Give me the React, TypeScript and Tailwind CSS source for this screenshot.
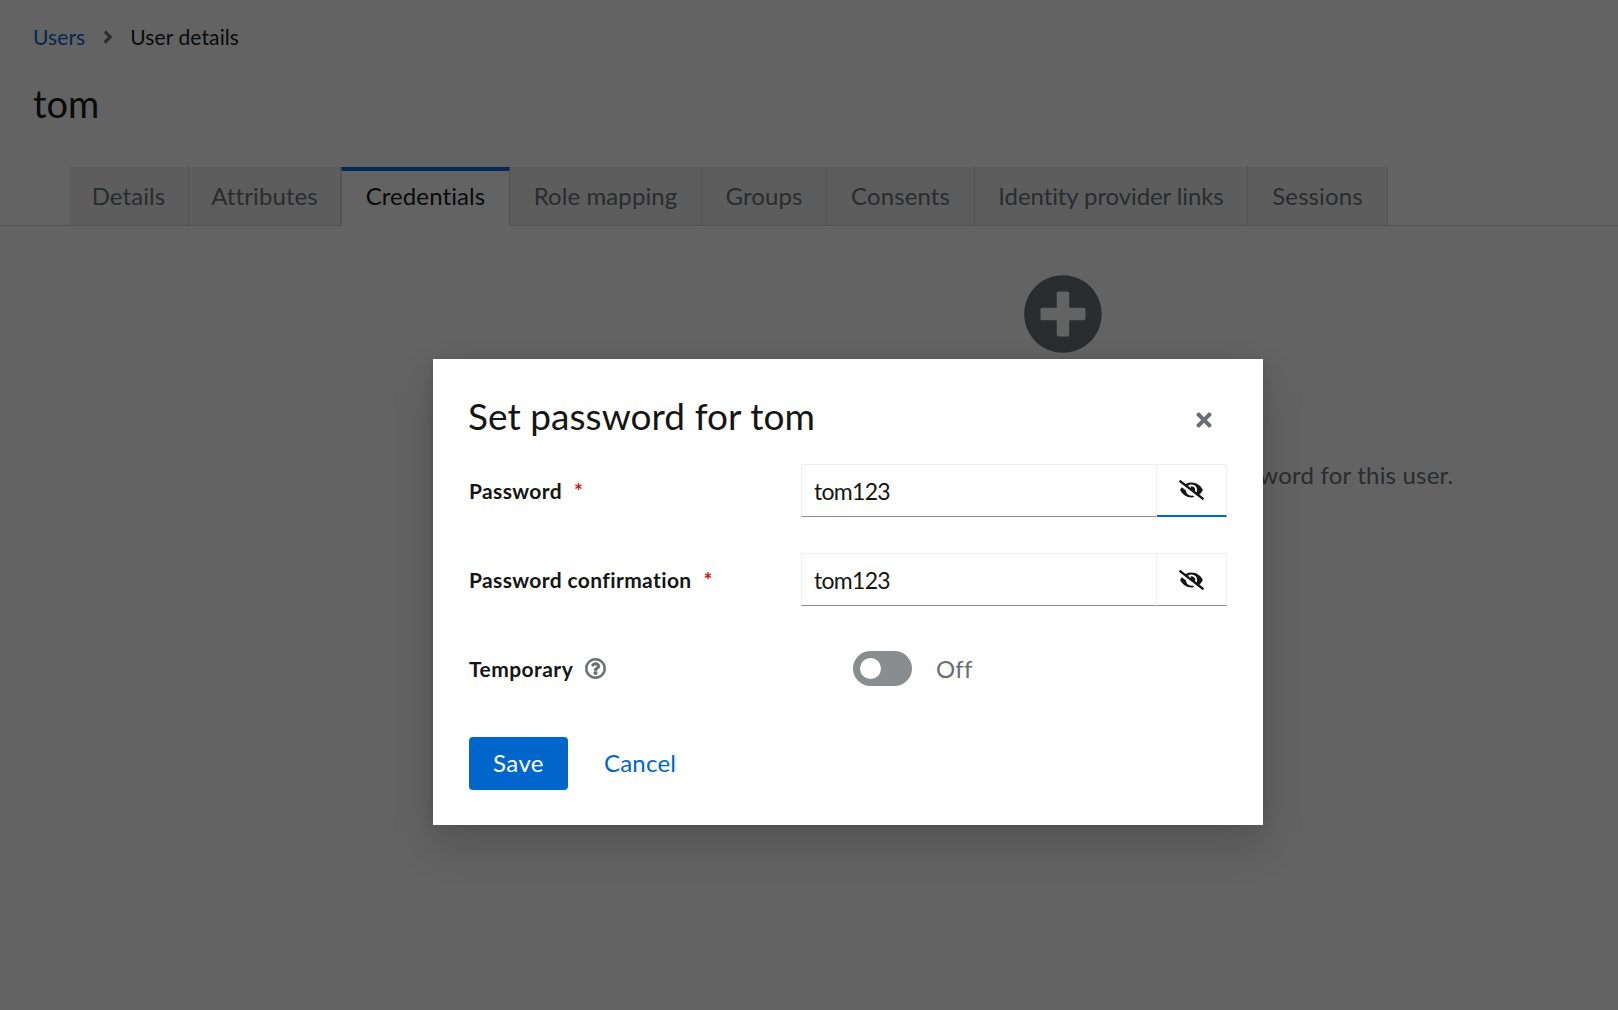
import { FaAngleRight, FaEyeSlash, FaPlusCircle, FaRegQuestionCircle, FaTimes } from "react-icons/fa";

const tabs = [
  { name: "Details", w: "w-[120px]", track: "tracking-[0.1px]" },
  { name: "Attributes", w: "w-[152px]", track: "tracking-[0.1px]" },
  { name: "Credentials", w: "w-[169px]", track: "tracking-[0.1px]", active: true },
  { name: "Role mapping", w: "w-[192px]", track: "tracking-[0.1px]" },
  { name: "Groups", w: "w-[125px]", track: "tracking-[0.1px]" },
  { name: "Consents", w: "w-[148px]", track: "tracking-[0.1px]" },
  { name: "Identity provider links", w: "w-[273px]", track: "tracking-[-0.1px]" },
  { name: "Sessions", w: "w-[140px]", track: "tracking-[0.1px]" },
];

function PasswordRow({ label, focused }: { label: string; focused?: boolean }) {
  return (
    <div className="flex items-center h-[53px]">
      <div className="w-[332px] flex items-center text-[21px] tracking-[0.38px] font-bold text-[#151515]">
        <span>{label}</span>
        <span className="ml-[12px] text-[#c9190b]">*</span>
      </div>
      <div className="flex w-[426px] h-[53px]">
        <div className="w-[356px] border border-[#f0f0f0] border-b-[#8a8d90] px-[12px] pt-[1px] flex items-center text-[23px] tracking-[-0.7px] text-[#151515]">
          tom123
        </div>
        <div
          className={`flex-1 flex items-center justify-center border border-l-0 border-[#f0f0f0] text-[#151515] ${
            focused ? "border-b-2 border-b-[#06c]" : "border-b-[#8a8d90]"
          }`}
        >
          <FaEyeSlash className="w-[25px] h-[20px]" />
        </div>
      </div>
    </div>
  );
}

export default function App() {
  return (
    <div className="relative w-[1618px] h-[1010px] overflow-hidden bg-white font-['Lato',sans-serif] text-[#151515]">
      <div className="pl-[33px] pt-[23px] h-[167px]">
        <div className="flex items-center text-[21px] tracking-[0.1px] leading-[28px]">
          <span className="text-[#06c]">Users</span>
          <FaAngleRight className="ml-[16px] mr-[15px] w-[14px] h-[20px] text-[#6a6e73]" />
          <span>User details</span>
        </div>
        <div className="mt-[30px] text-[38px] leading-[44px]">tom</div>
      </div>
      <div className="flex pl-[69px] border-b border-[#d2d2d2] h-[59px]">
        {tabs.map((t) => (
          <div
            key={t.name}
            className={`${t.w} ${t.track} flex items-center justify-center text-[24px] border-r border-[#d2d2d2] ${
              t.active
                ? "bg-white text-[#151515] border-t-[4px] border-t-[#06c] border-l h-[59px] pb-[6px]"
                : "bg-[#f0f0f0] text-[#6a6e73] h-[58px]"
            }`}
          >
            {t.name}
          </div>
        ))}
      </div>
      <div className="flex flex-col items-center pt-[48px] ml-[508px] w-[1110px]">
        <FaPlusCircle className="w-[80px] h-[80px] text-[#6a6e73]" />
        <div className="mt-[38px] text-[28px]">No credentials</div>
        <div className="mt-[23px] mr-[19px] text-[24px] tracking-[0.2px] text-[#6a6e73] whitespace-nowrap">
          This user does not have any credentials. You can set password for this user.
        </div>
      </div>

      <div className="absolute inset-0 bg-[rgba(3,3,3,0.62)]" />

      <div className="absolute left-[433px] top-[359px] w-[830px] h-[466px] bg-white px-[36px] pt-[35px] shadow-[0_20px_40px_rgba(3,3,3,0.16),0_0_10px_rgba(3,3,3,0.1)]">
        <div className="flex items-start justify-between">
          <div className="-ml-[1px] text-[37px] tracking-[0.05px] leading-[44px] text-[#151515]">Set password for tom</div>
          <FaTimes className="mt-[15px] mr-[12px] w-[22px] h-[22px] text-[#6a6e73]" />
        </div>
        <div className="mt-[26px] flex flex-col gap-[36px]">
          <PasswordRow label="Password" focused />
          <PasswordRow label="Password confirmation" />
          <div className="flex items-center h-[53px]">
            <div className="w-[332px] flex items-center text-[21px] tracking-[0.45px] font-bold">
              <span>Temporary</span>
              <FaRegQuestionCircle
                stroke="currentColor"
                strokeWidth={16}
                className="ml-[12px] w-[21px] h-[21px] text-[#6a6e73]"
              />
            </div>
            <div className="ml-[52px] w-[59px] h-[35px] rounded-full bg-[#8a8d90] flex items-center pl-[7px]">
              <div className="w-[21px] h-[21px] rounded-full bg-white" />
            </div>
            <span className="ml-[24px] text-[24px] tracking-[0.2px] text-[#6a6e73]">Off</span>
          </div>
        </div>
        <div className="mt-[42px] flex items-center">
          <div className="w-[99px] h-[53px] pb-[2px] rounded-[4px] bg-[#06c] text-white text-[24px] tracking-[0.4px] flex items-center justify-center">
            Save
          </div>
          <span className="ml-[36px] pb-[2px] text-[24px] tracking-[0.2px] text-[#06c]">Cancel</span>
        </div>
      </div>
    </div>
  );
}
